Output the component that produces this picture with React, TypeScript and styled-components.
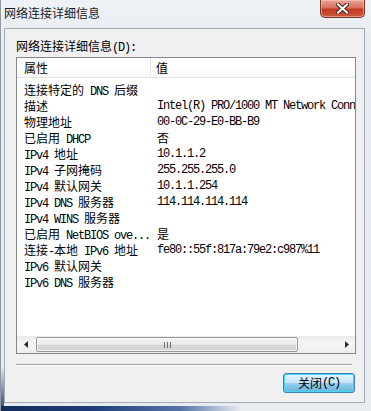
import React from 'react';
import styled, { createGlobalStyle } from 'styled-components';

const Global = createGlobalStyle`
  html, body { margin: 0; padding: 0; }
  body {
    width: 371px;
    height: 411px;
    overflow: hidden;
    background: #e9edf2;
  }
`;

const Window = styled.div`
  width: 371px;
  height: 411px;
  box-sizing: border-box;
  display: flex;
  flex-direction: column;
  border-left: 1px solid #8f98a2;
  font-family: "Liberation Mono", "Noto Sans CJK SC", monospace;
  font-size: 12px;
  letter-spacing: -1.2px;
  color: #000;
  background:
    linear-gradient(to top, rgba(18, 44, 92, 0.9), rgba(18, 44, 92, 0) 45px) left bottom / 3px 60px no-repeat,
    linear-gradient(#eef2f6, #e6ebf1 60px, #e8ecf1);
`;

const Han = styled.span`
  font-family: "Noto Sans CJK SC", sans-serif;
  letter-spacing: 0;
`;

const CJK = /([\u2e80-\u9fff\uf900-\ufaff\uff01-\uff5e]+)/;
const Mixed = ({ text }: { text: string }) => (
  <>{text.split(CJK).map((p, i) => (i % 2 ? <Han key={i}>{p}</Han> : p))}</>
);

const TitleBar = styled.div`
  height: 28px;
  flex: none;
  display: flex;
  align-items: flex-start;
`;

const Title = styled.div`
  padding-left: 3px;
  line-height: 26px;
  color: #1a1a1a;
`;

const CloseBtn = styled.div`
  margin-left: auto;
  margin-right: 6px;
  width: 45px;
  height: 18px;
  box-sizing: border-box;
  border: 1px solid #7a3328;
  border-top: none;
  border-radius: 0 0 5px 5px;
  background: linear-gradient(#e9a496 0%, #d9705c 45%, #c23b23 55%, #cf5a3f 100%);
  box-shadow: inset 0 0 0 1px rgba(255, 220, 210, 0.45);
  display: flex;
  align-items: center;
  justify-content: center;
`;

const Client = styled.div`
  margin: 0 6px 0 3px;
  height: 375px;
  flex: none;
  box-sizing: border-box;
  border: 1px solid #a2abb5;
  background: #f0f0f0;
  display: flex;
  flex-direction: column;
`;

const Label = styled.div`
  margin: 10px 0 0 11px;
  line-height: 14px;
`;

const ListView = styled.div`
  margin: 2px 0 0 11px;
  width: 340px;
  height: 297px;
  box-sizing: border-box;
  border: 1px solid #828790;
  background: #fff;
  display: flex;
  flex-direction: column;
  overflow: hidden;
`;

const Header = styled.div`
  height: 19px;
  flex: none;
  display: flex;
  border-bottom: 1px solid #e5e5e5;
  background: linear-gradient(#ffffff, #ffffff 50%, #f7f8f9);
`;

const HeaderCell = styled.div<{ $w?: number }>`
  ${p => (p.$w ? `width: ${p.$w}px; border-right: 1px solid #e3e5e7;` : 'flex: 1;')}
  box-sizing: border-box;
  padding-left: ${p => (p.$w ? 7 : 5)}px;
  line-height: 19px;
  white-space: nowrap;
`;

const Rows = styled.div`
  flex: 1;
  padding-top: 4px;
  overflow: hidden;
`;

const Row = styled.div`
  height: 16px;
  display: flex;
  line-height: 16px;
  white-space: nowrap;
`;

const NameCell = styled.div`
  width: 134px;
  flex: none;
  box-sizing: border-box;
  padding-left: 7px;
  overflow: hidden;
`;

const ValueCell = styled.div`
  padding-left: 6px;
`;

const HScroll = styled.div`
  height: 17px;
  flex: none;
  display: flex;
  align-items: center;
  background: linear-gradient(#e9e9e9, #f3f3f3 30%, #f3f3f3 70%, #ececec);
`;

const ArrowBtn = styled.div`
  width: 17px;
  height: 17px;
  flex: none;
  display: flex;
  align-items: center;
  justify-content: center;
`;

const Thumb = styled.div`
  margin-left: 2px;
  width: 262px;
  height: 15px;
  box-sizing: border-box;
  border: 1px solid #979797;
  border-radius: 2px;
  background: linear-gradient(#f4f4f4, #eaeaea 45%, #d9d9d9 55%, #d2d2d2);
  box-shadow: inset 0 0 0 1px rgba(255, 255, 255, 0.7);
  display: flex;
  align-items: center;
  justify-content: center;
`;

const Spacer = styled.div`
  flex: 1;
`;

const Separator = styled.div`
  margin: 10px 0 0 11px;
  width: 336px;
  height: 1px;
  background: #a0a0a0;
  border-bottom: 1px solid #ffffff;
`;

const ButtonRow = styled.div`
  display: flex;
  justify-content: flex-end;
  padding: 7px 9px 0 0;
`;

const Button = styled.div`
  width: 72px;
  height: 20px;
  box-sizing: border-box;
  border: 1px solid #3c7fb1;
  border-radius: 3px;
  background: linear-gradient(#e5f4fc, #c4e5f6 50%, #98d1ef 51%, #68b3db);
  box-shadow: inset 0 0 0 1px #48d6f8;
  display: flex;
  align-items: center;
  justify-content: center;
  line-height: 18px;
`;

const Taskbar = styled.div`
  margin-top: auto;
  height: 5px;
  flex: none;
  background: linear-gradient(to right, #142c5a 0px, #1d3d78 90px, #5575a8 180px, rgba(200, 212, 228, 0) 240px);
`;

const rows: [string, string][] = [
  ['连接特定的 DNS 后缀', ''],
  ['描述', 'Intel(R) PRO/1000 MT Network Connection'],
  ['物理地址', '00-0C-29-E0-BB-B9'],
  ['已启用 DHCP', '否'],
  ['IPv4 地址', '10.1.1.2'],
  ['IPv4 子网掩码', '255.255.255.0'],
  ['IPv4 默认网关', '10.1.1.254'],
  ['IPv4 DNS 服务器', '114.114.114.114'],
  ['IPv4 WINS 服务器', ''],
  ['已启用 NetBIOS ove...', '是'],
  ['连接-本地 IPv6 地址', 'fe80::55f:817a:79e2:c987%11'],
  ['IPv6 默认网关', ''],
  ['IPv6 DNS 服务器', ''],
];

export default function App() {
  return (
    <>
      <Global />
      <Window>
        <TitleBar>
          <Title><Mixed text="网络连接详细信息" /></Title>
          <CloseBtn>
            <svg width="13" height="11" viewBox="0 0 13 11">
              <path d="M2 1.5 L11 9.5 M11 1.5 L2 9.5" stroke="#4a2620" strokeWidth="4" strokeLinecap="square" />
              <path d="M2 1.5 L11 9.5 M11 1.5 L2 9.5" stroke="#ffffff" strokeWidth="2" strokeLinecap="square" />
            </svg>
          </CloseBtn>
        </TitleBar>
        <Client>
          <Label><Mixed text="网络连接详细信息(D):" /></Label>
          <ListView>
            <Header>
              <HeaderCell $w={134}><Mixed text="属性" /></HeaderCell>
              <HeaderCell><Mixed text="值" /></HeaderCell>
            </Header>
            <Rows>
              {rows.map(([n, v], i) => (
                <Row key={i}>
                  <NameCell><Mixed text={n} /></NameCell>
                  <ValueCell><Mixed text={v} /></ValueCell>
                </Row>
              ))}
            </Rows>
            <HScroll>
              <ArrowBtn>
                <svg width="4" height="7" viewBox="0 0 4 7"><path d="M4 0 L0 3.5 L4 7 Z" fill="#2b2b2b" /></svg>
              </ArrowBtn>
              <Thumb>
                <svg width="7" height="6" viewBox="0 0 7 6">
                  <path d="M0.5 0 V6 M3.5 0 V6 M6.5 0 V6" stroke="#6f6f6f" strokeWidth="1" />
                </svg>
              </Thumb>
              <Spacer />
              <ArrowBtn>
                <svg width="4" height="7" viewBox="0 0 4 7"><path d="M0 0 L4 3.5 L0 7 Z" fill="#2b2b2b" /></svg>
              </ArrowBtn>
            </HScroll>
          </ListView>
          <Separator />
          <ButtonRow>
            <Button><Mixed text="关闭(C)" /></Button>
          </ButtonRow>
        </Client>
        <Taskbar />
      </Window>
    </>
  );
}
